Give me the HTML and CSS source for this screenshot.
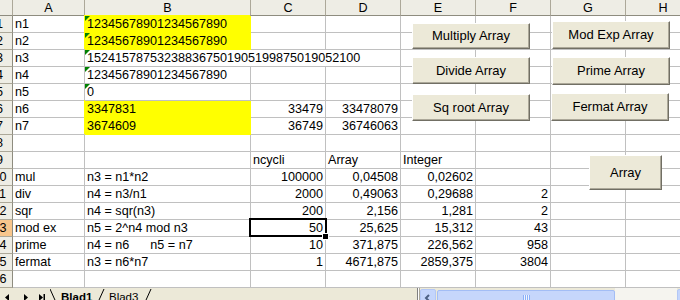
FILE: index.html
```html
<!DOCTYPE html>
<html>
<head>
	<title>Blad1</title>
	<meta charset="utf-8">
	<link rel="stylesheet" href="styles.css">
</head>
<body>
	<div class="sheet">
		<table class="grid">
			<tr class="colHeads">
				<th class="corner"></th>
				<th class="colHead colA">A</th>
				<th class="colHead colB">B</th>
				<th class="colHead colN active">C</th>
				<th class="colHead colN">D</th>
				<th class="colHead colN">E</th>
				<th class="colHead colN">F</th>
				<th class="colHead colN">G</th>
				<th class="colHead colN">H</th>
			</tr>
			<tr><th class="rowHead">1</th><td>n1</td><td class="yellow flag">12345678901234567890</td><td></td><td></td><td></td><td></td><td></td><td></td></tr>
			<tr><th class="rowHead">2</th><td>n2</td><td class="yellow flag">12345678901234567890</td><td></td><td></td><td></td><td></td><td></td><td></td></tr>
			<tr><th class="rowHead">3</th><td>n3</td><td class="flag" colspan="3">152415787532388367501905199875019052100</td><td></td><td></td><td></td><td></td></tr>
			<tr><th class="rowHead">4</th><td>n4</td><td class="flag">12345678901234567890</td><td></td><td></td><td></td><td></td><td></td><td></td></tr>
			<tr><th class="rowHead">5</th><td>n5</td><td class="flag">0</td><td></td><td></td><td></td><td></td><td></td><td></td></tr>
			<tr><th class="rowHead">6</th><td>n6</td><td class="yellow">3347831</td><td class="num">33479</td><td class="num">33478079</td><td></td><td></td><td></td><td></td></tr>
			<tr><th class="rowHead">7</th><td>n7</td><td class="yellow">3674609</td><td class="num">36749</td><td class="num">36746063</td><td></td><td></td><td></td><td></td></tr>
			<tr><th class="rowHead">8</th><td></td><td></td><td></td><td></td><td></td><td></td><td></td><td></td></tr>
			<tr><th class="rowHead">9</th><td></td><td></td><td>ncycli</td><td>Array</td><td>Integer</td><td></td><td></td><td></td></tr>
			<tr><th class="rowHead">10</th><td>mul</td><td>n3 = n1*n2</td><td class="num">100000</td><td class="num">0,04508</td><td class="num">0,02602</td><td></td><td></td><td></td></tr>
			<tr><th class="rowHead">11</th><td>div</td><td>n4 = n3/n1</td><td class="num">2000</td><td class="num">0,49063</td><td class="num">0,29688</td><td class="num">2</td><td></td><td></td></tr>
			<tr><th class="rowHead">12</th><td>sqr</td><td>n4 = sqr(n3)</td><td class="num">200</td><td class="num">2,156</td><td class="num">1,281</td><td class="num">2</td><td></td><td></td></tr>
			<tr><th class="rowHead active">13</th><td>mod ex</td><td>n5 = 2^n4 mod n3</td><td class="num current">50<div class="cursor"></div></td><td class="num">25,625</td><td class="num">15,312</td><td class="num">43</td><td></td><td></td></tr>
			<tr><th class="rowHead">14</th><td>prime</td><td class="pre">n4 = n6      n5 = n7</td><td class="num">10</td><td class="num">371,875</td><td class="num">226,562</td><td class="num">958</td><td></td><td></td></tr>
			<tr><th class="rowHead">15</th><td>fermat</td><td>n3 = n6*n7</td><td class="num">1</td><td class="num">4671,875</td><td class="num">2859,375</td><td class="num">3804</td><td></td><td></td></tr>
			<tr><th class="rowHead">16</th><td></td><td></td><td></td><td></td><td></td><td></td><td></td><td></td></tr>
		</table>

		<!-- form buttons lying on the sheet -->
		<div class="btn btnMul">Multiply Array</div>
		<div class="btn btnDiv">Divide Array</div>
		<div class="btn btnSqr">Sq root Array</div>
		<div class="btn btnMod">Mod Exp Array</div>
		<div class="btn btnPrime">Prime Array</div>
		<div class="btn btnFermat">Fermat Array</div>
		<div class="btn btnArray">Array</div>
	</div>

	<div class="tabBar">
		<svg class="tabNav" width="50" height="18" viewBox="0 0 50 18">
			<polygon points="9,6 5,9.5 9,13" fill="#000"/>
			<polygon points="24,6 28,9.5 24,13" fill="#000"/>
			<polygon points="39,6 43,9.5 39,13" fill="#000"/>
			<rect x="43.5" y="6" width="1.5" height="7" fill="#000"/>
		</svg>
		<div class="tabs">
			<svg width="120" height="18" viewBox="0 0 120 18">
				<line x1="0" y1="1" x2="7.7" y2="18" stroke="#000" stroke-width="1"/>
				<line x1="54" y1="1" x2="46.3" y2="18" stroke="#000" stroke-width="1"/>
				<line x1="101" y1="1" x2="93.3" y2="18" stroke="#000" stroke-width="1"/>
				<text x="11" y="12.5" class="tabActive">Blad1</text>
				<text x="59" y="12.5" class="tabText">Blad3</text>
			</svg>
		</div>
		<div class="splitter"></div>
		<div class="scrollBtn">
			<svg width="14" height="16" viewBox="0 0 14 16"><polyline points="8,5 5,8 8,11" fill="none" stroke="#4d6185" stroke-width="2"/></svg>
		</div>
		<div class="thumb"></div>
		<div class="track"></div>
		<div class="scrollBtn"></div>
	</div>
</body>
</html>
```

FILE: styles.css
```css
/* page */
body {
	margin: 0;
	padding: 0;
	background-color: #fff;
	font-family: "Liberation Sans", Arial, sans-serif;
	overflow: hidden;
	width: 680px;
	height: 300px;
}

.sheet {
	position: relative;
	height: 288px;
}

/* grid */
.grid {
	margin-left: -13px;
	border-collapse: separate;
	border-spacing: 0;
	table-layout: fixed;
	width: 714px;
	font-size: 12.6px;
}

.grid td,
.grid th {
	box-sizing: border-box;
	border-right: 1px solid #c0c0c0;
	border-bottom: 1px solid #c0c0c0;
	padding: 0 2px;
	height: 17px;
	line-height: 16px;
	vertical-align: top;
	white-space: nowrap;
	text-align: left;
	font-weight: normal;
	color: #000;
}

.grid .colHeads th {
	height: 16px;
	padding-top: 1px;
	line-height: 14px;
	background-color: #eeede5;
	border-right-color: #aca899;
	border-bottom-color: #8e8c7f;
	text-align: center;
}

.corner { width: 26px; }
.colA { width: 72px; }
.colB { width: 166px; }
.colN { width: 75px; }

.grid .rowHead {
	padding: 0;
	background-color: #eeede5;
	border-right-color: #8e8c7f;
	border-bottom-color: #aca899;
	text-align: center;
}

.grid .active {
	background-color: #f8c68c;
}

.grid .num {
	text-align: right;
}

.grid .pre {
	white-space: pre;
}

.grid .yellow {
	background-color: #ff0;
	border-right-color: #ff0;
	border-bottom-color: #ff0;
	box-shadow: -1px -1px 0 #ff0;
}

/* green "number stored as text" corner */
.grid .flag {
	position: relative;
}

.grid .flag::before {
	content: "";
	position: absolute;
	top: 0;
	left: 0;
	border-top: 5px solid #008000;
	border-right: 5px solid transparent;
}

/* active cell */
.grid .current {
	position: relative;
}

.cursor {
	position: absolute;
	top: -2px;
	left: -2px;
	right: -2px;
	bottom: -1px;
	border: 2px solid #000;
}

.cursor::after {
	content: "";
	position: absolute;
	right: -3px;
	bottom: -4px;
	width: 5px;
	height: 5px;
	background-color: #000;
	box-shadow: 0 0 0 1px #fff;
}

/* buttons */
.btn {
	position: absolute;
	box-sizing: border-box;
	display: flex;
	align-items: center;
	justify-content: center;
	background-color: #ece9d8;
	border: 1px solid;
	border-color: #fff #716f64 #716f64 #fff;
	box-shadow: inset -1px -1px 0 #aca899;
	font-size: 13px;
	color: #000;
	padding-bottom: 1px;
}

.btnMul { left: 412px; top: 23px; width: 118px; height: 26px; }
.btnDiv { left: 412px; top: 57px; width: 118px; height: 27px; }
.btnSqr { left: 412px; top: 94px; width: 118px; height: 27px; }
.btnMod { left: 552px; top: 21px; width: 118px; height: 28px; }
.btnPrime { left: 552px; top: 57px; width: 118px; height: 28px; }
.btnFermat { left: 551px; top: 93px; width: 118px; height: 28px; }
.btnArray { left: 589px; top: 155px; width: 73px; height: 35px; }

/* sheet tabs and scrollbar */
.tabBar {
	display: flex;
	height: 18px;
	background-color: #ece9d8;
}

.tabNav {
	flex: none;
}

.tabs {
	flex: none;
	width: 367px;
}

.tabs text {
	font-family: "Liberation Sans", Arial, sans-serif;
	font-size: 11.5px;
	fill: #000;
}

.tabs .tabActive {
	font-weight: bold;
}

.splitter {
	flex: none;
	box-sizing: border-box;
	width: 3px;
	border-left: 1px solid #808080;
	border-right: 1px solid #aca899;
	background-color: #fff;
}

.scrollBtn {
	flex: none;
	box-sizing: border-box;
	width: 16px;
	height: 17px;
	margin-top: 1px;
	background-color: #c4d5fc;
	border: 1px solid #b3c7f5;
	border-radius: 2px;
}

.scrollBtn svg {
	display: block;
}

.thumb {
	position: relative;
	flex: none;
	box-sizing: border-box;
	width: 178px;
	height: 16px;
	margin: 2px 0 0 1px;
	background-color: #c6d6fb;
	border: 1px solid #a3bdf5;
	border-radius: 2px;
}

.thumb::after {
	content: "";
	position: absolute;
	left: 85px;
	top: 4px;
	width: 7px;
	height: 8px;
	background: repeating-linear-gradient(90deg, #8cb0f8 0 1px, #eef4fe 1px 2px);
}

.track {
	flex: none;
	width: 62px;
	background-color: #f5f4ef;
}
```
